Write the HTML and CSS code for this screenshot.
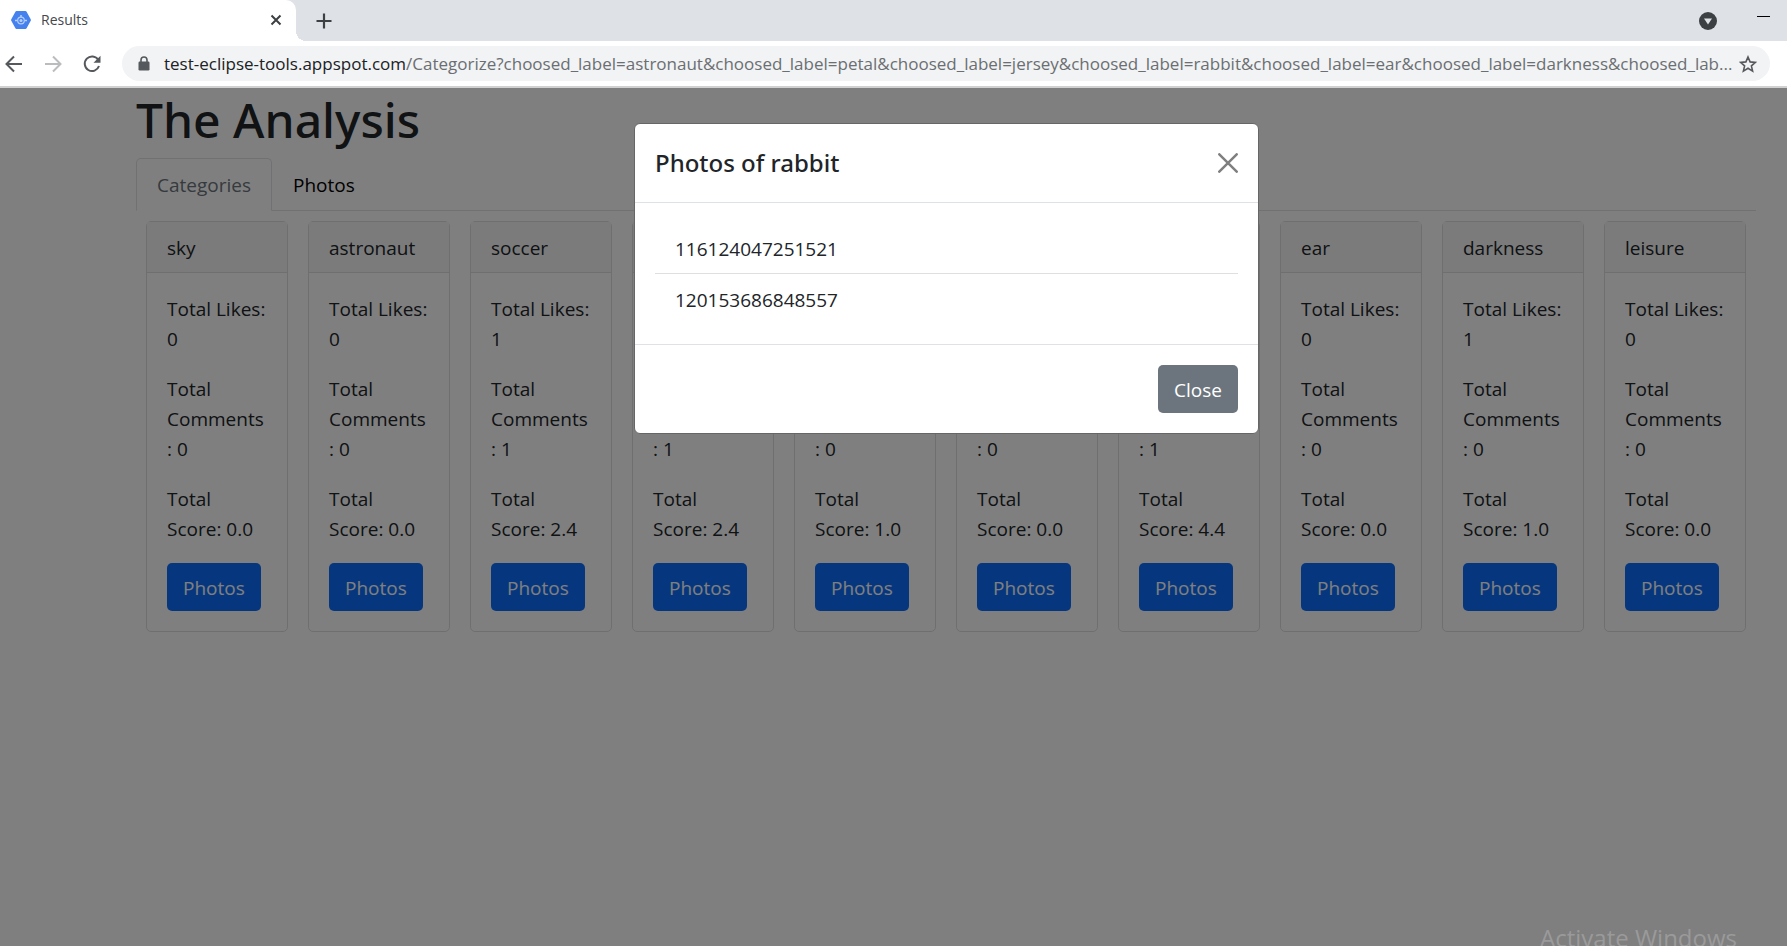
FILE: index.html
```html
<!DOCTYPE html>
<html lang="en">
<head>
<meta charset="utf-8">
<title>Results</title>
<link rel="stylesheet" href="styles.css">
</head>
<body>
<header class="browser">
  <div class="tabstrip">
    <div class="tab">
      <svg class="tab-icon" viewBox="0 0 20 18" aria-hidden="true">
        <path d="M5.6 0h8.8a1.4 1.4 0 0 1 1.2.7l4.1 7.5a1.6 1.6 0 0 1 0 1.6l-4.1 7.5a1.4 1.4 0 0 1-1.2.7H5.6a1.4 1.4 0 0 1-1.2-.7L.3 9.8a1.6 1.6 0 0 1 0-1.6L4.4.7A1.4 1.4 0 0 1 5.6 0z" fill="#4582ee"/>
        <circle cx="10" cy="9.500" r="3.300" fill="none" stroke="#b4cefb" stroke-width="1.200"/>
        <circle cx="10" cy="9.500" r="1.500" fill="#b4cefb"/>
        <path d="M10 4v2M4 9.500h2.500M16 9.500h-2.500" stroke="#b4cefb" stroke-width="1.500"/>
      </svg>
      <span class="tab-title">Results</span>
      <button class="icon-button" aria-label="Close tab">
        <svg width="12" height="12" viewBox="0 0 12 12"><path d="M1.500 1.500l9 9M10.500 1.500l-9 9" stroke="#3c4043" stroke-width="2"/></svg>
      </button>
    </div>
    <button class="icon-button new-tab" aria-label="New tab">
      <svg width="16" height="16" viewBox="0 0 16 16"><path d="M8 .5v15M.5 8h15" stroke="#3c4043" stroke-width="2.200"/></svg>
    </button>
    <div class="window-tools">
      <button class="icon-button" aria-label="Search tabs">
        <svg width="18" height="18" viewBox="0 0 18 18"><circle cx="9" cy="9" r="9" fill="#3c4043"/><path d="M5 6.500h8L9 12.500z" fill="#dee1e6"/></svg>
      </button>
      <button class="icon-button minimize" aria-label="Minimize">
        <svg width="13" height="18" viewBox="0 0 13 18"><path d="M0 4.500h13" stroke="#000"/></svg>
      </button>
    </div>
  </div>
  <div class="toolbar">
    <button class="icon-button back" aria-label="Back">
      <svg width="18" height="18" viewBox="0 0 18 18"><path d="M17 9H2M9 1.500L1.500 9 9 16.500" fill="none" stroke="#55585c" stroke-width="2"/></svg>
    </button>
    <button class="icon-button" aria-label="Forward">
      <svg width="18" height="18" viewBox="0 0 18 18"><path d="M1 9h15M9 1.500L16.500 9 9 16.500" fill="none" stroke="#babcbe" stroke-width="2"/></svg>
    </button>
    <button class="icon-button" aria-label="Reload">
      <svg width="18" height="18" viewBox="0 0 18 18"><path d="M15.200 4.800A7.300 7.300 0 1 0 16 11" fill="none" stroke="#55585c" stroke-width="2"/><path d="M17.500.8v7h-7z" fill="#55585c"/></svg>
    </button>
    <div class="address">
      <svg class="lock" viewBox="0 0 12 15" aria-hidden="true"><path d="M3 6.500V4a3 3 0 0 1 6 0v2.500" fill="none" stroke="#55585c" stroke-width="1.600"/><rect x=".5" y="5.500" width="11" height="9" rx="1.200" fill="#55585c"/></svg>
      <label class="host" for="url">test-eclipse-tools.appspot.com</label>
      <input class="path" id="url" type="text" value="/Categorize?choosed_label=astronaut&amp;choosed_label=petal&amp;choosed_label=jersey&amp;choosed_label=rabbit&amp;choosed_label=ear&amp;choosed_label=darkness&amp;choosed_lab...">
      <button class="icon-button" aria-label="Bookmark this page">
        <svg width="18" height="18" viewBox="0 0 18 18"><path d="M9 2l2.100 4.900 5.300.5-4 3.500 1.200 5.200L9 13.300l-4.600 2.800 1.200-5.200-4-3.500 5.300-.5z" fill="none" stroke="#55585c" stroke-width="1.600"/></svg>
      </button>
    </div>
  </div>
</header>

<div class="viewport">
  <main class="page">
    <h1 class="heading">The Analysis</h1>
    <nav class="nav-tabs">
      <a class="nav-link active" href="#categories">Categories</a>
      <a class="nav-link" href="#photos">Photos</a>
    </nav>
    <section class="cards" id="categories"></section>
  </main>
  <div class="backdrop">
    <div class="modal" role="dialog" aria-labelledby="modal-title">
      <div class="modal-header">
        <h2 class="modal-title" id="modal-title">Photos of rabbit</h2>
        <button class="icon-button" aria-label="Close">
          <svg width="20" height="20" viewBox="0 0 20 20"><path d="M1.300 1.300l17.400 17.400M18.700 1.300L1.300 18.700" stroke="#7f7f7f" stroke-width="2.500" stroke-linecap="round"/></svg>
        </button>
      </div>
      <ul class="photo-list">
        <li class="photo-item">116124047251521</li>
        <li class="photo-item">120153686848557</li>
      </ul>
      <div class="modal-footer">
        <button class="btn btn-secondary">Close</button>
      </div>
    </div>
  </div>
  <div class="watermark">Activate Windows</div>
</div>
<script src="cards.js"></script>
</body>
</html>
```

FILE: styles.css
```css
* { box-sizing: border-box; }
body {
  margin: 0;
  height: 100vh;
  display: flex;
  flex-direction: column;
  overflow: hidden;
  background: #fff;
  color: #212529;
  font: 19px/30px "Open Sans", "Noto Sans", sans-serif;
}
button, input { font: inherit; }
.icon-button {
  display: flex;
  align-items: center;
  justify-content: center;
  flex: none;
  padding: 0;
  border: 0;
  background: none;
}

/* Browser frame */
.browser { flex: none; border-bottom: 2px solid #d0d1d2; }
.tabstrip {
  display: flex;
  align-items: center;
  height: 41px;
  background: #dee1e6;
}
.tab {
  position: relative;
  display: flex;
  align-items: center;
  gap: 10px;
  width: 296px;
  height: 100%;
  padding: 0 14px 2px 11px;
  background: #fff;
  border-top-right-radius: 10px;
}
.tab::after {
  content: "";
  position: absolute;
  left: 100%;
  bottom: 0;
  width: 10px;
  height: 10px;
  background: radial-gradient(circle at 100% 0, #dee1e6 10px, #fff 10px);
}
.tab-icon { width: 20px; height: 18px; }
.tab-title { flex: 1; font-size: 14px; color: #45484c; }
.new-tab { margin-left: 20px; }
.window-tools { display: flex; gap: 40px; margin-left: auto; padding-right: 17px; }
.toolbar {
  display: flex;
  align-items: center;
  gap: 21px;
  height: 45px;
  padding: 0 17px 0 5px;
}
.address {
  flex: 1;
  display: flex;
  align-items: center;
  min-width: 0;
  height: 35px;
  padding: 0 13px 0 16px;
  border-radius: 18px;
  background: #f1f3f4;
  font-size: 17px;
}
.lock { width: 12px; height: 15px; margin-right: 14px; }
.host { color: #202124; }
.path {
  flex: 1;
  min-width: 0;
  padding: 0;
  border: 0;
  outline: 0;
  background: none;
  color: #6b6e72;
}

/* Results page */
.viewport { position: relative; flex: 1; overflow: hidden; }
.page { padding: 2px 31px 0 136px; }
.heading {
  margin: 0 0 8px;
  font-family: "Noto Sans", "Open Sans", sans-serif;
  font-size: 48px;
  line-height: 60px;
  font-weight: 500;
}
.nav-tabs { display: flex; border-bottom: 1px solid #dee2e6; }
.nav-link {
  margin-bottom: -1px;
  padding: 11px 20px 10px;
  border: 1px solid transparent;
  border-radius: 5px 5px 0 0;
  color: #000;
  text-decoration: none;
}
.nav-link.active {
  border-color: #dee2e6 #dee2e6 #fff;
  background: #fff;
  color: #6c757d;
}
.cards {
  display: grid;
  grid-template-columns: repeat(10, minmax(0, 1fr));
  gap: 20px;
  padding: 10px;
}
.card { border: 1px solid #dfdfdf; border-radius: 5px; }
.card-header {
  padding: 11px 20px 9px;
  border-bottom: 1px solid #dfdfdf;
  background: #f7f7f7;
}
.card-body { padding: 21px 20px 20px; white-space: nowrap; }
.card-text { margin: 0 0 20px; }
.card-text:last-of-type { margin-bottom: 19px; }
.btn {
  display: block;
  padding: 10px 16px 8px;
  border: 0;
  border-radius: 5px;
  color: #fff;
}
.btn-primary { background: #0d6efd; }
.btn-secondary { background: #6c757d; }

/* Dialog; the window extends past the right edge, so its centre lies right of the middle */
.backdrop {
  position: absolute;
  inset: 0;
  display: flex;
  justify-content: center;
  align-items: flex-start;
  padding: 35px 0 0 106px;
  background: rgba(0, 0, 0, .5);
}
.modal {
  width: 100%;
  max-width: 625px;
  border: 1px solid #666;
  border-radius: 6px;
  background: #fff;
}
.modal-header {
  display: flex;
  align-items: center;
  justify-content: space-between;
  padding: 20px;
  border-bottom: 1px solid #dee2e6;
}
.modal-title {
  margin: 0;
  font-family: "Noto Sans", "Open Sans", sans-serif;
  font-size: 24px;
  line-height: 38px;
  font-weight: 500;
}
.photo-list { margin: 0; padding: 20px; list-style: none; }
.photo-item { padding: 11px 20px 9px; }
.photo-item + .photo-item { border-top: 1px solid #dfdfdf; }
.modal-footer {
  display: flex;
  justify-content: flex-end;
  padding: 20px;
  border-top: 1px solid #dee2e6;
}
.watermark {
  position: absolute;
  right: 50px;
  bottom: -10px;
  font-size: 24px;
  line-height: 36px;
  color: #9a9a9a;
}
```

FILE: cards.js
```js
const categories = [
  ["sky", 0, 0, "0.0"],
  ["astronaut", 0, 0, "0.0"],
  ["soccer", 1, 1, "2.4"],
  ["player", 1, 1, "2.4"],
  ["petal", 1, 0, "1.0"],
  ["jersey", 0, 0, "0.0"],
  ["rabbit", 2, 1, "4.4"],
  ["ear", 0, 0, "0.0"],
  ["darkness", 1, 0, "1.0"],
  ["leisure", 0, 0, "0.0"]
];

document.querySelector(".cards").innerHTML = categories.map(([name, likes, comments, score]) => `
  <article class="card">
    <div class="card-header">${name}</div>
    <div class="card-body">
      <p class="card-text">Total Likes:<br>${likes}</p>
      <p class="card-text">Total<br>Comments<br>: ${comments}</p>
      <p class="card-text">Total<br>Score: ${score}</p>
      <button class="btn btn-primary">Photos</button>
    </div>
  </article>`).join("");
```
